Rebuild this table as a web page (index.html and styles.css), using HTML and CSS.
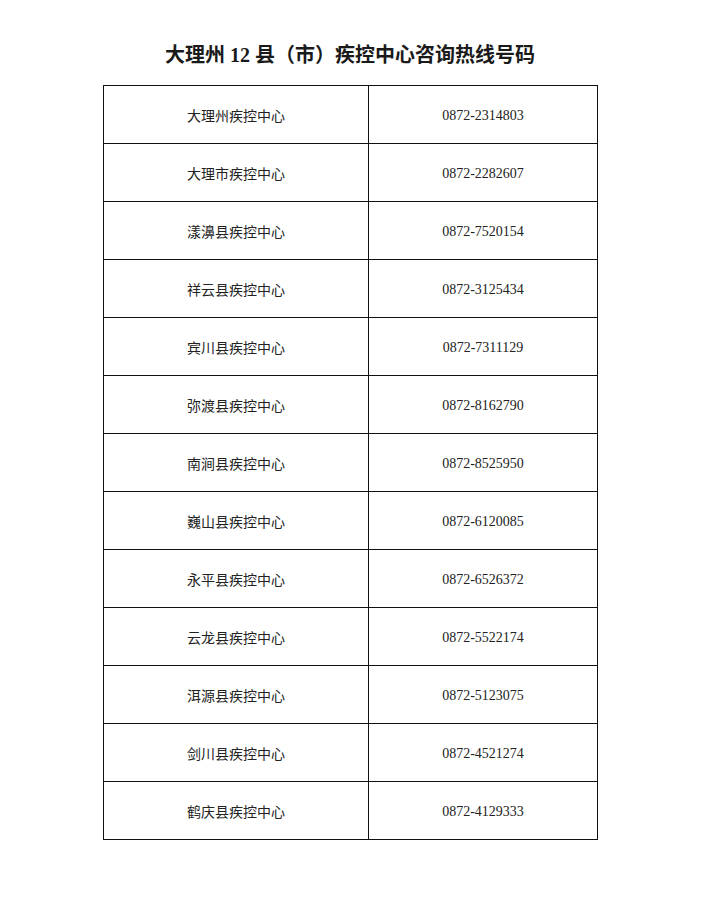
FILE: index.html
```html
<!DOCTYPE html>
<html lang="zh-CN">
<head>
<meta charset="utf-8">
<title>大理州12县（市）疾控中心咨询热线号码</title>
<link rel="stylesheet" href="styles.css">
</head>
<body>
<div class="page">
  <h1 class="title">大理州 12 县（市）疾控中心咨询热线号码</h1>
  <table class="hotlines">
    <colgroup><col class="col-name"><col class="col-phone"></colgroup>
    <tr><td class="name">大理州疾控中心</td><td class="phone">0872-2314803</td></tr>
    <tr><td class="name">大理市疾控中心</td><td class="phone">0872-2282607</td></tr>
    <tr><td class="name">漾濞县疾控中心</td><td class="phone">0872-7520154</td></tr>
    <tr><td class="name">祥云县疾控中心</td><td class="phone">0872-3125434</td></tr>
    <tr><td class="name">宾川县疾控中心</td><td class="phone">0872-7311129</td></tr>
    <tr><td class="name">弥渡县疾控中心</td><td class="phone">0872-8162790</td></tr>
    <tr><td class="name">南涧县疾控中心</td><td class="phone">0872-8525950</td></tr>
    <tr><td class="name">巍山县疾控中心</td><td class="phone">0872-6120085</td></tr>
    <tr><td class="name">永平县疾控中心</td><td class="phone">0872-6526372</td></tr>
    <tr><td class="name">云龙县疾控中心</td><td class="phone">0872-5522174</td></tr>
    <tr><td class="name">洱源县疾控中心</td><td class="phone">0872-5123075</td></tr>
    <tr><td class="name">剑川县疾控中心</td><td class="phone">0872-4521274</td></tr>
    <tr><td class="name">鹤庆县疾控中心</td><td class="phone">0872-4129333</td></tr>
  </table>
</div>
</body>
</html>
```

FILE: styles.css
```css
html, body {
  margin: 0;
  padding: 0;
  background: #ffffff;
}

.page {
  width: 702px;
  min-height: 915px;
  padding-top: 43px;
  box-sizing: border-box;
}

.title {
  margin: 0 0 18px 0;
  text-align: center;
  font-family: "Liberation Serif", "Noto Sans CJK SC", serif;
  font-size: 20px;
  line-height: 24px;
  font-weight: bold;
  color: #1a1a1a;
  padding-right: 2px;
}

.hotlines {
  margin-left: 103px;
  border-collapse: collapse;
  table-layout: fixed;
  width: 494px;
}

.col-name {
  width: 265px;
}

.col-phone {
  width: 229px;
}

.hotlines td {
  border: 1px solid #111111;
  height: 57px;
  padding: 0;
  text-align: center;
  vertical-align: middle;
  color: #222222;
  font-size: 14px;
  line-height: 18px;
}

.hotlines .name {
  font-family: "Noto Sans CJK SC", sans-serif;
  font-weight: normal;
}

.hotlines .phone {
  font-family: "Liberation Serif", serif;
  font-size: 14px;
  height: 55px;
  padding-top: 2px;
}
```
